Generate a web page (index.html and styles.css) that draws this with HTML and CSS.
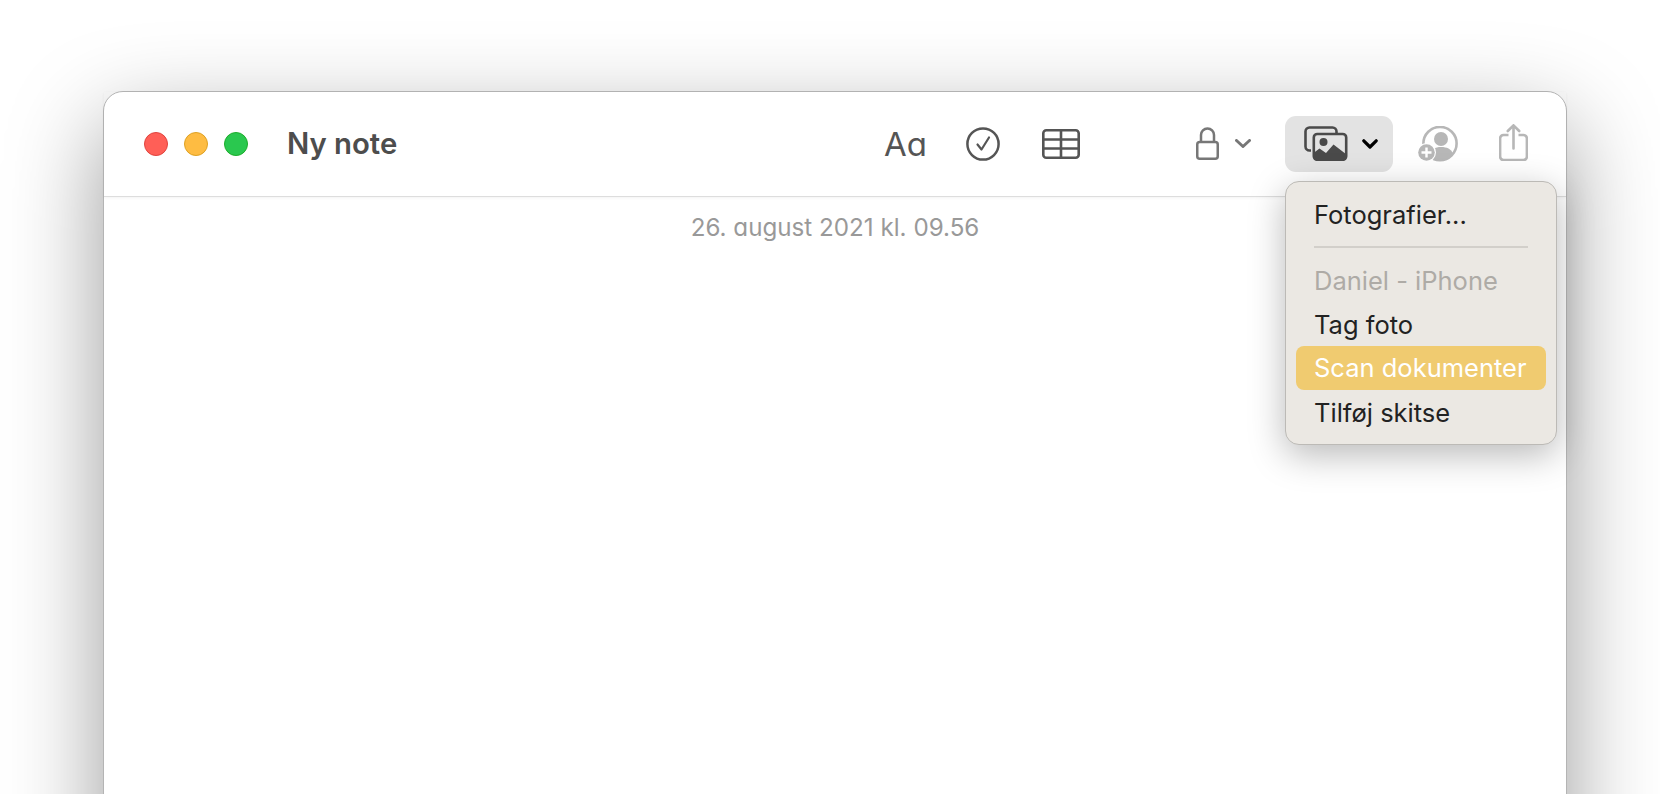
FILE: index.html
```html
<!DOCTYPE html>
<html lang="da">
<head>
    <meta charset="UTF-8">
    <meta name="viewport" content="width=device-width, initial-scale=1.0">
    <link rel="stylesheet" href="styles.css">
    <title>Ny note</title>
</head>
<body>
    <div class="window">
        <div class="toolbar">
            <div class="lights">
                <span class="light red"></span>
                <span class="light yellow"></span>
                <span class="light green"></span>
            </div>
            <div class="title">Ny note</div>
            <div class="format-tools">
                <span class="aa">Aa</span>
                <svg width="34" height="34" viewBox="0 0 34 34" fill="none" stroke="#555" stroke-width="2.5">
                    <circle cx="17" cy="17" r="15.6"/>
                    <path d="M11.5 17.5l4 5 7.5-12" stroke-width="2.2" stroke-linecap="round" stroke-linejoin="round"/>
                </svg>
                <svg width="38" height="30" viewBox="0 0 38 30" fill="none" stroke="#555" stroke-width="2.6">
                    <rect x="1.3" y="1.3" width="35.4" height="27.4" rx="3"/>
                    <path d="M1 10.500h36M1 19.500h36M19 1v28"/>
                </svg>
            </div>
            <div class="lock-tool">
                <svg width="23" height="33" viewBox="0 0 23 33" fill="none" stroke="#777" stroke-width="2.5">
                    <rect x="1.250" y="15" width="20.500" height="16.700" rx="2.500"/>
                    <path d="M5 15V8a6.500 6.500 0 0 1 13 0v7"/>
                </svg>
                <svg width="16" height="9" viewBox="0 0 16 9" fill="none" stroke="#777" stroke-width="3" stroke-linecap="round" stroke-linejoin="round">
                    <path d="M1.500 1.500L8 7.500l6.500-6"/>
                </svg>
            </div>
            <div class="media-button">
                <svg width="44" height="35" viewBox="0 0 44 35" fill="none">
                    <path d="M7 24.500H5.500a4 4 0 0 1-4-4V5.500a4 4 0 0 1 4-4h23a4 4 0 0 1 4 4V7" stroke="#4a4a4a" stroke-width="2.600"/>
                    <rect x="9.800" y="8" width="32.400" height="25.800" rx="3.500" stroke="#4a4a4a" stroke-width="2.600"/>
                    <circle cx="19.500" cy="16" r="4" fill="#4a4a4a"/>
                    <path d="M9.500 27l6-4.500 6.500 4.500 7.500-8.500 13 10V31a3.500 3.500 0 0 1-3.500 3.500H13a3.500 3.500 0 0 1-3.500-3.500z" fill="#4a4a4a"/>
                </svg>
                <svg width="16" height="10" viewBox="0 0 16 10" fill="none" stroke="#000" stroke-width="3.200" stroke-linecap="round" stroke-linejoin="round">
                    <path d="M1.800 1.800L8 8l6.200-6.200"/>
                </svg>
            </div>
            <svg class="collab-tool" width="41" height="36" viewBox="0 0 41 36" fill="none">
                <circle cx="23" cy="17.500" r="16.600" stroke="#b7b7b7" stroke-width="2.600"/>
                <circle cx="24" cy="13" r="7" fill="#b7b7b7"/>
                <path d="M12 28.500c2-5.500 6-7.500 12-7.500s10 2 12 6.500c-3 4-7.500 6.500-13 6.500-4 0-8-2-11-5.500z" fill="#b7b7b7"/>
                <circle cx="9.500" cy="26.500" r="9.500" fill="#fff"/>
                <circle cx="9.500" cy="26.500" r="8.300" fill="#b7b7b7"/>
                <path d="M9.500 21.500v10M4.500 26.500h10" stroke="#fff" stroke-width="2.400"/>
            </svg>
            <svg class="share-tool" width="29" height="37" viewBox="0 0 29 37" fill="none" stroke="#b7b7b7" stroke-width="2.600">
                <path d="M9.500 11H4.500a3.400 3.400 0 0 0-3.400 3.400v18.200a3.400 3.400 0 0 0 3.400 3.400h20a3.400 3.400 0 0 0 3.400-3.400V14.400A3.400 3.400 0 0 0 24.500 11h-5"/>
                <path d="M14.500 24.500V1.500M8.800 7l5.700-5.700L20.200 7" stroke-linecap="round" stroke-linejoin="round"/>
            </svg>
        </div>
        <div class="note">
            <div class="note-date">26. august 2021 kl. 09.56</div>
        </div>
        <div class="menu">
            <div class="menu-item">Fotografier...</div>
            <div class="menu-separator"></div>
            <div class="menu-item disabled">Daniel - iPhone</div>
            <div class="menu-item">Tag foto</div>
            <div class="menu-item active">Scan dokumenter</div>
            <div class="menu-item">Tilføj skitse</div>
        </div>
    </div>
</body>
</html>
```

FILE: styles.css
```css
html, body {
    height: 100%;
}

body {
    margin: 0;
    padding: 91px 93px 0 103px;
    box-sizing: border-box;
    background-color: #fff;
    font-family: Inter, "Noto Sans", sans-serif;
    overflow: hidden;
}

.window {
    position: relative;
    height: 800px;
    background-color: #fff;
    border: 1px solid #b4b4b4;
    border-radius: 20px;
    box-shadow: 0 34px 95px rgba(0, 0, 0, 0.4);
}

.toolbar {
    display: flex;
    align-items: center;
    height: 103px;
    padding: 0 38px 1px 40px;
    border-bottom: 1px solid #ddd;
    box-shadow: 0 1px 3px rgba(0, 0, 0, 0.05);
}

.lights {
    display: flex;
    gap: 16px;
}

.light {
    width: 22px;
    height: 22px;
    border-radius: 50%;
    border: 1px solid;
}

.red {
    background-color: #ff5f57;
    border-color: #e0443e;
}

.yellow {
    background-color: #febc42;
    border-color: #dea123;
}

.green {
    background-color: #2ac84f;
    border-color: #1dad2b;
}

.title {
    margin-left: 39px;
    font-size: 29.3px;
    font-weight: 600;
    color: #4d4d4d;
}

.format-tools {
    display: flex;
    align-items: center;
    gap: 42px;
    margin-left: auto;
}

.aa {
    margin-right: -3px;
    font-size: 33px;
    font-weight: 400;
    color: #555;
    font-feature-settings: "cv11";
}

.lock-tool {
    display: flex;
    align-items: center;
    gap: 16px;
    margin-left: 116px;
}

.media-button {
    display: flex;
    align-items: center;
    gap: 14px;
    width: 108px;
    height: 56px;
    margin-left: 34px;
    padding-left: 19px;
    box-sizing: border-box;
    background-color: #e3e3e3;
    border-radius: 11px;
}

.collab-tool {
    margin-left: 24px;
}

.share-tool {
    margin-left: 41px;
    margin-bottom: 3px;
}

.note {
    padding-top: 16px;
    text-align: center;
}

.note-date {
    font-size: 24.2px;
    line-height: 30px;
    color: #999;
    font-feature-settings: "cv11";
}

/* popup under the media button */
.menu {
    position: absolute;
    top: 89px;
    right: 9px;
    width: 272px;
    box-sizing: border-box;
    padding: 11px 10px 9px;
    background-color: #ebe8e3;
    border: 1px solid #bcbab6;
    border-radius: 14px;
    box-shadow: 0 10px 36px rgba(0, 0, 0, 0.28);
}

.menu-item {
    height: 44px;
    line-height: 44px;
    padding-left: 18px;
    border-radius: 8px;
    font-size: 25.5px;
    color: #222;
}

.menu-item.disabled {
    color: #aeaba6;
}

.menu-item.active {
    margin: -1px 0 1px;
    background-color: #f0cb70;
    color: #fff;
}

.menu-separator {
    height: 2px;
    margin: 9px 18px 11px;
    background-color: #d2cfca;
}
```
